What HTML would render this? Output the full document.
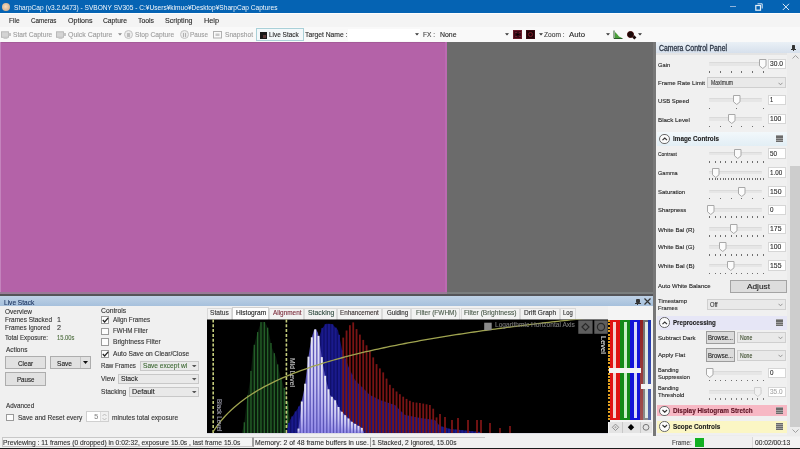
<!DOCTYPE html>
<html><head><meta charset="utf-8"><style>*{margin:0;padding:0;box-sizing:border-box}
html,body{width:800px;height:449px;overflow:hidden;background:#f0f0f0;font-family:"Liberation Sans",sans-serif;font-size:8px;color:#222;position:relative}
.a{position:absolute;white-space:nowrap}
.t{transform-origin:0 50%;-webkit-text-stroke:0.12px currentColor;filter:blur(0.35px)}
</style></head><body>
<div class="a" style="left:0px;top:0px;width:800px;height:13px;background:#0563b3"></div>
<div class="a" style="left:0px;top:13px;width:800px;height:1px;background:#fdfdfd"></div>
<div class="a" style="left:0px;top:14px;width:800px;height:13px;background:#f4f4f4"></div>
<div class="a" style="left:0px;top:27px;width:800px;height:15px;background:#f9f9f9"></div>
<div class="a" style="left:0px;top:42px;width:447px;height:252px;background:#b462a8"></div>
<div class="a" style="left:447px;top:42px;width:208px;height:252px;background:#6b6b6b"></div>
<div class="a" style="left:0px;top:42px;width:447px;height:1.3px;background:#a45a98"></div>
<div class="a" style="left:0px;top:42px;width:1.3px;height:252px;background:#c483bd"></div>
<div class="a" style="left:444.5px;top:42px;width:2.5px;height:252px;background:#bc6ab2"></div>
<div class="a" style="left:0px;top:292.3px;width:447px;height:1.7px;background:#9a7a98"></div>
<div class="a" style="left:447px;top:292.3px;width:208px;height:1.7px;background:#7a7e7e"></div>
<div class="a" style="left:0px;top:294px;width:655px;height:2px;background:#545458"></div>
<div class="a" style="left:0px;top:296px;width:655px;height:10px;background:linear-gradient(#bfd2e6,#a6c0dc)"></div>
<div class="a" style="left:0px;top:306px;width:655px;height:130px;background:#f0f0f0"></div>
<div class="a" style="left:655px;top:42px;width:145px;height:394px;background:#ececec"></div>
<div class="a" style="left:0px;top:436px;width:800px;height:13px;background:#f0f0f0"></div>
<div class="a" style="left:2px;top:3px;width:8px;height:8px;border-radius:50%;background:radial-gradient(circle at 45% 45%,#f3dcc0,#c9a07a)"></div>
<div class="a" style="left:729.5px;top:5.8px;width:6px;height:1px;background:#8fb4dc"></div>
<svg class="a" style="left:755px;top:2.5px" width="8" height="8" style="filter:blur(0.3px)"><path d="M2.5 0.8H7.2V5.5" stroke="#d8e6f4" fill="none" stroke-width="1"/><rect x="0.8" y="2.5" width="4.7" height="4.7" stroke="#e8f0f8" fill="none" stroke-width="1.2"/></svg>
<svg class="a" style="left:782px;top:2.5px" width="8" height="8"><path d="M0.8 0.8L7 7M7 0.8L0.8 7" stroke="#dde9f6" stroke-width="1"/></svg>
<svg class="a" style="left:1px;top:31px" width="11" height="9"><rect x="0.5" y="0.8" width="7" height="5.5" fill="#d4d4d4" stroke="#b4b4b4" stroke-width="0.9"/><rect x="7.5" y="2" width="2.5" height="3" fill="#c4c4c4"/><rect x="2.5" y="6.3" width="4" height="1.6" fill="#c8c8c8"/></svg>
<svg class="a" style="left:56px;top:31px" width="11" height="9"><rect x="0.5" y="0.8" width="7" height="5.5" fill="#d4d4d4" stroke="#b4b4b4" stroke-width="0.9"/><rect x="7.5" y="2" width="2.5" height="3" fill="#c4c4c4"/><rect x="2.5" y="6.3" width="4" height="1.6" fill="#c8c8c8"/></svg>
<svg class="a" style="left:118.0px;top:33px" width="4" height="3"><path d="M0 0.3H4L2 2.6Z" fill="#888"/></svg>
<div class="a" style="left:124px;top:30px;width:9px;height:9px;border-radius:50%;border:1px solid #c4c4c4;background:#ececec"></div>
<div class="a" style="left:127px;top:32.5px;width:3px;height:4px;background:#bdbdbd"></div>
<div class="a" style="left:179.5px;top:30px;width:9px;height:9px;border-radius:50%;border:1px solid #c4c4c4;background:#ececec"></div>
<div class="a" style="left:182.5px;top:32.5px;width:1px;height:4px;background:#b0b0b0"></div>
<div class="a" style="left:184.5px;top:32.5px;width:1px;height:4px;background:#b0b0b0"></div>
<svg class="a" style="left:213px;top:30px" width="9" height="9"><rect x="0.5" y="1.5" width="8" height="6.5" fill="none" stroke="#b0b0b0"/><rect x="2.5" y="3.5" width="4" height="2.5" fill="#c8c8c8"/></svg>
<div class="a" style="left:256px;top:28px;width:47.5px;height:12.5px;background:#f3f8fa;border:1px solid #a9d0d8"></div>
<div class="a" style="left:260px;top:32px;width:7px;height:7px;background:#1a1a1a"></div>
<div class="a" style="left:263px;top:35px;width:3px;height:3px;background:#5a3a3a"></div>
<div class="a" style="left:348px;top:29px;width:72px;height:12px;background:#ffffff"></div>
<svg class="a" style="left:414.5px;top:33px" width="4" height="3"><path d="M0 0.3H4L2 2.6Z" fill="#333"/></svg>
<svg class="a" style="left:504.5px;top:33px" width="4" height="3"><path d="M0 0.3H4L2 2.6Z" fill="#333"/></svg>
<div class="a" style="left:512.5px;top:30px;width:9.5px;height:9px;background:#3a0a16;border:1px solid #6a1a28"></div>
<svg class="a" style="left:513.5px;top:31px" width="8" height="7"><path d="M1.5 1.5h1M5.5 1.5h1M1.5 5.5h1M5.5 5.5h1" stroke="#9a2a40" stroke-width="1"/><path d="M2.5 2.2l3 1.3l-3 1.3z" fill="#000"/></svg>
<div class="a" style="left:525.5px;top:30px;width:9px;height:9px;background:#200608;border:1px solid #3a0a12"></div>
<div class="a" style="left:527.5px;top:32px;width:5px;height:5px;border-radius:50%;border:1px solid #7a1a2a"></div>
<svg class="a" style="left:538.5px;top:33px" width="4" height="3"><path d="M0 0.3H4L2 2.6Z" fill="#333"/></svg>
<svg class="a" style="left:605.5px;top:33px" width="4" height="3"><path d="M0 0.3H4L2 2.6Z" fill="#333"/></svg>
<svg class="a" style="left:613px;top:30px" width="10" height="9"><path d="M1 0.5V8.5H9.5" stroke="#2a5a2a" fill="none" stroke-width="1"/><path d="M2 8L2 2L4 4L6 6.5L9 8z" fill="#4aa03a"/></svg>
<div class="a" style="left:627px;top:30.5px;width:7px;height:7px;border-radius:50%;background:#1a0a0a;border:1px solid #3a0000"></div>
<div class="a" style="left:632.5px;top:36px;width:3px;height:2.5px;background:#1a0a0a;transform:rotate(45deg)"></div>
<svg class="a" style="left:637.5px;top:33px" width="4" height="3"><path d="M0 0.3H4L2 2.6Z" fill="#333"/></svg>
<div class="a" style="left:652.5px;top:42px;width:3px;height:252px;background:#575757"></div>
<div class="a" style="left:655px;top:42px;width:1px;height:394px;background:#8a8a8a"></div>
<div class="a" style="left:656px;top:42px;width:144px;height:11px;background:linear-gradient(#eaf0f6,#d6e0ec)"></div>
<div class="a" style="left:792px;top:44.5px;width:3px;height:4px;background:#333;border-radius:0.5px"></div>
<div class="a" style="left:791.2px;top:48.5px;width:4.6px;height:0.9px;background:#333"></div>
<div class="a" style="left:793.1px;top:49.4px;width:0.9px;height:1.6px;background:#333"></div>
<div class="a" style="left:656px;top:53px;width:144px;height:2px;background:#e4e4e4"></div>
<div class="a" style="left:656px;top:55px;width:131px;height:380px;background:#f0f0f0"></div>
<div class="a" style="left:787px;top:53px;width:13px;height:383px;background:#ececec"></div>
<div class="a" style="left:789.5px;top:165.6px;width:10.5px;height:261.4px;background:#cdcdcd"></div>
<svg class="a" style="left:792px;top:55px" width="7" height="4"><path d="M0.5 3.5L3.5 0.5L6.5 3.5" stroke="#a0a0a0" fill="none" stroke-width="1"/></svg>
<svg class="a" style="left:792px;top:429px" width="7" height="4"><path d="M0.5 0.5L3.5 3.5L6.5 0.5" stroke="#a0a0a0" fill="none" stroke-width="1"/></svg>
<div class="a" style="left:708.5px;top:62px;width:53.5px;height:3.5px;background:#e6e6e6;border-radius:1px;border-top:1px solid #dadada"></div>
<div class="a" style="left:709.0px;top:71.15px;width:1.2px;height:1.5px;background:#6e6e6e"></div>
<div class="a" style="left:720.0px;top:71.15px;width:1.2px;height:1.5px;background:#6e6e6e"></div>
<div class="a" style="left:730.5px;top:71.15px;width:1.2px;height:1.5px;background:#6e6e6e"></div>
<div class="a" style="left:741.0px;top:71.15px;width:1.2px;height:1.5px;background:#6e6e6e"></div>
<div class="a" style="left:752.0px;top:71.15px;width:1.2px;height:1.5px;background:#6e6e6e"></div>
<div class="a" style="left:762.5px;top:71.15px;width:1.2px;height:1.5px;background:#6e6e6e"></div>
<svg class="a" style="left:759.2px;top:59px" width="8" height="10"><path d="M0.5 0.5H7V6.8L3.75 9.5L0.5 6.8Z" fill="#fbfbfb" stroke="#a8a8a8" stroke-width="1"/></svg>
<div class="a" style="left:767.5px;top:58.5px;width:18px;height:10.5px;background:#fff;border:1px solid #d6d6d6"></div>
<div class="a" style="left:707px;top:77.4px;width:78.5px;height:11px;background:#e9e9e9;border:1px solid #cfcfcf"></div>
<svg class="a" style="left:778px;top:81.5px" width="5" height="4"><path d="M0.5 0.8L2.5 2.8L4.5 0.8" stroke="#8a8a8a" fill="none" stroke-width="0.9"/></svg>
<div class="a" style="left:708.5px;top:98px;width:53.5px;height:3.5px;background:#e6e6e6;border-radius:1px;border-top:1px solid #dadada"></div>
<div class="a" style="left:709.0px;top:107.75px;width:1.2px;height:1.5px;background:#6e6e6e"></div>
<div class="a" style="left:736.0px;top:107.75px;width:1.2px;height:1.5px;background:#6e6e6e"></div>
<div class="a" style="left:762.5px;top:107.75px;width:1.2px;height:1.5px;background:#6e6e6e"></div>
<svg class="a" style="left:733px;top:95px" width="8" height="10"><path d="M0.5 0.5H7V6.8L3.75 9.5L0.5 6.8Z" fill="#fbfbfb" stroke="#a8a8a8" stroke-width="1"/></svg>
<div class="a" style="left:767.5px;top:94.5px;width:18px;height:10.5px;background:#fff;border:1px solid #d6d6d6"></div>
<div class="a" style="left:708.5px;top:117px;width:53.5px;height:3.5px;background:#e6e6e6;border-radius:1px;border-top:1px solid #dadada"></div>
<div class="a" style="left:709.0px;top:125.85px;width:1.2px;height:1.5px;background:#6e6e6e"></div>
<div class="a" style="left:720.0px;top:125.85px;width:1.2px;height:1.5px;background:#6e6e6e"></div>
<div class="a" style="left:730.5px;top:125.85px;width:1.2px;height:1.5px;background:#6e6e6e"></div>
<div class="a" style="left:741.0px;top:125.85px;width:1.2px;height:1.5px;background:#6e6e6e"></div>
<div class="a" style="left:752.0px;top:125.85px;width:1.2px;height:1.5px;background:#6e6e6e"></div>
<div class="a" style="left:762.5px;top:125.85px;width:1.2px;height:1.5px;background:#6e6e6e"></div>
<svg class="a" style="left:728px;top:114px" width="8" height="10"><path d="M0.5 0.5H7V6.8L3.75 9.5L0.5 6.8Z" fill="#fbfbfb" stroke="#a8a8a8" stroke-width="1"/></svg>
<div class="a" style="left:767.5px;top:113.5px;width:18px;height:10.5px;background:#fff;border:1px solid #d6d6d6"></div>
<div class="a" style="left:657px;top:131.75px;width:130px;height:14.050000000000011px;background:linear-gradient(#f2f8fb,#e2eef5)"></div>
<div class="a" style="left:659.4px;top:133.57500000000002px;width:10.4px;height:10.4px;border-radius:50%;border:0.9px solid #6a6a6a;background:#fbfbfb"></div>
<svg class="a" style="left:660.9px;top:135.675px" width="7.5" height="6"><path d="M1.5 4.2L3.75 2L6 4.2" stroke="#333" fill="none" stroke-width="1.1"/></svg>
<div class="a" style="left:776px;top:135.375px;width:7px;height:6.8px;background:#a0a0a0"></div>
<div class="a" style="left:776px;top:135.675px;width:7px;height:0.9px;background:#6a6a6a"></div>
<div class="a" style="left:776px;top:137.425px;width:7px;height:0.9px;background:#6a6a6a"></div>
<div class="a" style="left:776px;top:139.175px;width:7px;height:0.9px;background:#6a6a6a"></div>
<div class="a" style="left:776px;top:140.925px;width:7px;height:0.9px;background:#6a6a6a"></div>
<div class="a" style="left:708.5px;top:151.5px;width:53.5px;height:3.5px;background:#e6e6e6;border-radius:1px;border-top:1px solid #dadada"></div>
<div class="a" style="left:709.0px;top:161.05px;width:1.2px;height:1.5px;background:#6e6e6e"></div>
<div class="a" style="left:714.5px;top:161.05px;width:1.2px;height:1.5px;background:#6e6e6e"></div>
<div class="a" style="left:720.0px;top:161.05px;width:1.2px;height:1.5px;background:#6e6e6e"></div>
<div class="a" style="left:725.0px;top:161.05px;width:1.2px;height:1.5px;background:#6e6e6e"></div>
<div class="a" style="left:730.5px;top:161.05px;width:1.2px;height:1.5px;background:#6e6e6e"></div>
<div class="a" style="left:736.0px;top:161.05px;width:1.2px;height:1.5px;background:#6e6e6e"></div>
<div class="a" style="left:741.0px;top:161.05px;width:1.2px;height:1.5px;background:#6e6e6e"></div>
<div class="a" style="left:746.5px;top:161.05px;width:1.2px;height:1.5px;background:#6e6e6e"></div>
<div class="a" style="left:752.0px;top:161.05px;width:1.2px;height:1.5px;background:#6e6e6e"></div>
<div class="a" style="left:757.0px;top:161.05px;width:1.2px;height:1.5px;background:#6e6e6e"></div>
<div class="a" style="left:762.5px;top:161.05px;width:1.2px;height:1.5px;background:#6e6e6e"></div>
<svg class="a" style="left:733.5px;top:148.5px" width="8" height="10"><path d="M0.5 0.5H7V6.8L3.75 9.5L0.5 6.8Z" fill="#fbfbfb" stroke="#a8a8a8" stroke-width="1"/></svg>
<div class="a" style="left:767.5px;top:148.0px;width:18px;height:10.5px;background:#fff;border:1px solid #d6d6d6"></div>
<div class="a" style="left:708.5px;top:170.5px;width:53.5px;height:3.5px;background:#e6e6e6;border-radius:1px;border-top:1px solid #dadada"></div>
<div class="a" style="left:709.0px;top:178.45px;width:1.2px;height:1.5px;background:#6e6e6e"></div>
<div class="a" style="left:712.0px;top:178.45px;width:1.2px;height:1.5px;background:#6e6e6e"></div>
<div class="a" style="left:714.5px;top:178.45px;width:1.2px;height:1.5px;background:#6e6e6e"></div>
<div class="a" style="left:717.0px;top:178.45px;width:1.2px;height:1.5px;background:#6e6e6e"></div>
<div class="a" style="left:720.0px;top:178.45px;width:1.2px;height:1.5px;background:#6e6e6e"></div>
<div class="a" style="left:722.5px;top:178.45px;width:1.2px;height:1.5px;background:#6e6e6e"></div>
<div class="a" style="left:725.0px;top:178.45px;width:1.2px;height:1.5px;background:#6e6e6e"></div>
<div class="a" style="left:728.0px;top:178.45px;width:1.2px;height:1.5px;background:#6e6e6e"></div>
<div class="a" style="left:730.5px;top:178.45px;width:1.2px;height:1.5px;background:#6e6e6e"></div>
<div class="a" style="left:733.0px;top:178.45px;width:1.2px;height:1.5px;background:#6e6e6e"></div>
<div class="a" style="left:736.0px;top:178.45px;width:1.2px;height:1.5px;background:#6e6e6e"></div>
<div class="a" style="left:738.5px;top:178.45px;width:1.2px;height:1.5px;background:#6e6e6e"></div>
<div class="a" style="left:741.0px;top:178.45px;width:1.2px;height:1.5px;background:#6e6e6e"></div>
<div class="a" style="left:744.0px;top:178.45px;width:1.2px;height:1.5px;background:#6e6e6e"></div>
<div class="a" style="left:746.5px;top:178.45px;width:1.2px;height:1.5px;background:#6e6e6e"></div>
<div class="a" style="left:749.0px;top:178.45px;width:1.2px;height:1.5px;background:#6e6e6e"></div>
<div class="a" style="left:752.0px;top:178.45px;width:1.2px;height:1.5px;background:#6e6e6e"></div>
<div class="a" style="left:754.5px;top:178.45px;width:1.2px;height:1.5px;background:#6e6e6e"></div>
<div class="a" style="left:757.0px;top:178.45px;width:1.2px;height:1.5px;background:#6e6e6e"></div>
<div class="a" style="left:760.0px;top:178.45px;width:1.2px;height:1.5px;background:#6e6e6e"></div>
<div class="a" style="left:762.5px;top:178.45px;width:1.2px;height:1.5px;background:#6e6e6e"></div>
<svg class="a" style="left:712px;top:167.5px" width="8" height="10"><path d="M0.5 0.5H7V6.8L3.75 9.5L0.5 6.8Z" fill="#fbfbfb" stroke="#a8a8a8" stroke-width="1"/></svg>
<div class="a" style="left:767.5px;top:167.0px;width:18px;height:10.5px;background:#fff;border:1px solid #d6d6d6"></div>
<div class="a" style="left:708.5px;top:189.5px;width:53.5px;height:3.5px;background:#e6e6e6;border-radius:1px;border-top:1px solid #dadada"></div>
<div class="a" style="left:709.0px;top:197.75px;width:1.2px;height:1.5px;background:#6e6e6e"></div>
<div class="a" style="left:720.0px;top:197.75px;width:1.2px;height:1.5px;background:#6e6e6e"></div>
<div class="a" style="left:730.5px;top:197.75px;width:1.2px;height:1.5px;background:#6e6e6e"></div>
<div class="a" style="left:741.0px;top:197.75px;width:1.2px;height:1.5px;background:#6e6e6e"></div>
<div class="a" style="left:752.0px;top:197.75px;width:1.2px;height:1.5px;background:#6e6e6e"></div>
<div class="a" style="left:762.5px;top:197.75px;width:1.2px;height:1.5px;background:#6e6e6e"></div>
<svg class="a" style="left:738px;top:186.5px" width="8" height="10"><path d="M0.5 0.5H7V6.8L3.75 9.5L0.5 6.8Z" fill="#fbfbfb" stroke="#a8a8a8" stroke-width="1"/></svg>
<div class="a" style="left:767.5px;top:186.0px;width:18px;height:10.5px;background:#fff;border:1px solid #d6d6d6"></div>
<div class="a" style="left:708.5px;top:208px;width:53.5px;height:3.5px;background:#e6e6e6;border-radius:1px;border-top:1px solid #dadada"></div>
<div class="a" style="left:709.0px;top:216.45px;width:1.2px;height:1.5px;background:#6e6e6e"></div>
<div class="a" style="left:714.5px;top:216.45px;width:1.2px;height:1.5px;background:#6e6e6e"></div>
<div class="a" style="left:720.0px;top:216.45px;width:1.2px;height:1.5px;background:#6e6e6e"></div>
<div class="a" style="left:725.0px;top:216.45px;width:1.2px;height:1.5px;background:#6e6e6e"></div>
<div class="a" style="left:730.5px;top:216.45px;width:1.2px;height:1.5px;background:#6e6e6e"></div>
<div class="a" style="left:736.0px;top:216.45px;width:1.2px;height:1.5px;background:#6e6e6e"></div>
<div class="a" style="left:741.0px;top:216.45px;width:1.2px;height:1.5px;background:#6e6e6e"></div>
<div class="a" style="left:746.5px;top:216.45px;width:1.2px;height:1.5px;background:#6e6e6e"></div>
<div class="a" style="left:752.0px;top:216.45px;width:1.2px;height:1.5px;background:#6e6e6e"></div>
<div class="a" style="left:757.0px;top:216.45px;width:1.2px;height:1.5px;background:#6e6e6e"></div>
<div class="a" style="left:762.5px;top:216.45px;width:1.2px;height:1.5px;background:#6e6e6e"></div>
<svg class="a" style="left:707px;top:205px" width="8" height="10"><path d="M0.5 0.5H7V6.8L3.75 9.5L0.5 6.8Z" fill="#fbfbfb" stroke="#a8a8a8" stroke-width="1"/></svg>
<div class="a" style="left:767.5px;top:204.5px;width:18px;height:10.5px;background:#fff;border:1px solid #d6d6d6"></div>
<div class="a" style="left:708.5px;top:227px;width:53.5px;height:3.5px;background:#e6e6e6;border-radius:1px;border-top:1px solid #dadada"></div>
<div class="a" style="left:709.0px;top:235.25px;width:1.2px;height:1.5px;background:#6e6e6e"></div>
<div class="a" style="left:714.5px;top:235.25px;width:1.2px;height:1.5px;background:#6e6e6e"></div>
<div class="a" style="left:720.0px;top:235.25px;width:1.2px;height:1.5px;background:#6e6e6e"></div>
<div class="a" style="left:725.0px;top:235.25px;width:1.2px;height:1.5px;background:#6e6e6e"></div>
<div class="a" style="left:730.5px;top:235.25px;width:1.2px;height:1.5px;background:#6e6e6e"></div>
<div class="a" style="left:736.0px;top:235.25px;width:1.2px;height:1.5px;background:#6e6e6e"></div>
<div class="a" style="left:741.0px;top:235.25px;width:1.2px;height:1.5px;background:#6e6e6e"></div>
<div class="a" style="left:746.5px;top:235.25px;width:1.2px;height:1.5px;background:#6e6e6e"></div>
<div class="a" style="left:752.0px;top:235.25px;width:1.2px;height:1.5px;background:#6e6e6e"></div>
<div class="a" style="left:757.0px;top:235.25px;width:1.2px;height:1.5px;background:#6e6e6e"></div>
<div class="a" style="left:762.5px;top:235.25px;width:1.2px;height:1.5px;background:#6e6e6e"></div>
<svg class="a" style="left:729.7px;top:224px" width="8" height="10"><path d="M0.5 0.5H7V6.8L3.75 9.5L0.5 6.8Z" fill="#fbfbfb" stroke="#a8a8a8" stroke-width="1"/></svg>
<div class="a" style="left:767.5px;top:223.5px;width:18px;height:10.5px;background:#fff;border:1px solid #d6d6d6"></div>
<div class="a" style="left:708.5px;top:245px;width:53.5px;height:3.5px;background:#e6e6e6;border-radius:1px;border-top:1px solid #dadada"></div>
<div class="a" style="left:709.0px;top:254.05px;width:1.2px;height:1.5px;background:#6e6e6e"></div>
<div class="a" style="left:714.5px;top:254.05px;width:1.2px;height:1.5px;background:#6e6e6e"></div>
<div class="a" style="left:720.0px;top:254.05px;width:1.2px;height:1.5px;background:#6e6e6e"></div>
<div class="a" style="left:725.0px;top:254.05px;width:1.2px;height:1.5px;background:#6e6e6e"></div>
<div class="a" style="left:730.5px;top:254.05px;width:1.2px;height:1.5px;background:#6e6e6e"></div>
<div class="a" style="left:736.0px;top:254.05px;width:1.2px;height:1.5px;background:#6e6e6e"></div>
<div class="a" style="left:741.0px;top:254.05px;width:1.2px;height:1.5px;background:#6e6e6e"></div>
<div class="a" style="left:746.5px;top:254.05px;width:1.2px;height:1.5px;background:#6e6e6e"></div>
<div class="a" style="left:752.0px;top:254.05px;width:1.2px;height:1.5px;background:#6e6e6e"></div>
<div class="a" style="left:757.0px;top:254.05px;width:1.2px;height:1.5px;background:#6e6e6e"></div>
<div class="a" style="left:762.5px;top:254.05px;width:1.2px;height:1.5px;background:#6e6e6e"></div>
<svg class="a" style="left:719.4px;top:242px" width="8" height="10"><path d="M0.5 0.5H7V6.8L3.75 9.5L0.5 6.8Z" fill="#fbfbfb" stroke="#a8a8a8" stroke-width="1"/></svg>
<div class="a" style="left:767.5px;top:241.5px;width:18px;height:10.5px;background:#fff;border:1px solid #d6d6d6"></div>
<div class="a" style="left:708.5px;top:263.5px;width:53.5px;height:3.5px;background:#e6e6e6;border-radius:1px;border-top:1px solid #dadada"></div>
<div class="a" style="left:709.0px;top:272.65px;width:1.2px;height:1.5px;background:#6e6e6e"></div>
<div class="a" style="left:714.5px;top:272.65px;width:1.2px;height:1.5px;background:#6e6e6e"></div>
<div class="a" style="left:720.0px;top:272.65px;width:1.2px;height:1.5px;background:#6e6e6e"></div>
<div class="a" style="left:725.0px;top:272.65px;width:1.2px;height:1.5px;background:#6e6e6e"></div>
<div class="a" style="left:730.5px;top:272.65px;width:1.2px;height:1.5px;background:#6e6e6e"></div>
<div class="a" style="left:736.0px;top:272.65px;width:1.2px;height:1.5px;background:#6e6e6e"></div>
<div class="a" style="left:741.0px;top:272.65px;width:1.2px;height:1.5px;background:#6e6e6e"></div>
<div class="a" style="left:746.5px;top:272.65px;width:1.2px;height:1.5px;background:#6e6e6e"></div>
<div class="a" style="left:752.0px;top:272.65px;width:1.2px;height:1.5px;background:#6e6e6e"></div>
<div class="a" style="left:757.0px;top:272.65px;width:1.2px;height:1.5px;background:#6e6e6e"></div>
<div class="a" style="left:762.5px;top:272.65px;width:1.2px;height:1.5px;background:#6e6e6e"></div>
<svg class="a" style="left:727.3px;top:260.5px" width="8" height="10"><path d="M0.5 0.5H7V6.8L3.75 9.5L0.5 6.8Z" fill="#fbfbfb" stroke="#a8a8a8" stroke-width="1"/></svg>
<div class="a" style="left:767.5px;top:260.0px;width:18px;height:10.5px;background:#fff;border:1px solid #d6d6d6"></div>
<div class="a" style="left:730.3px;top:279.8px;width:56.3px;height:13.1px;background:#dddddd;border:1px solid #a4a4a4"></div>
<div class="a" style="left:707.2px;top:298.5px;width:78.8px;height:11.8px;background:#e9e9e9;border:1px solid #cfcfcf"></div>
<svg class="a" style="left:778px;top:303px" width="5" height="4"><path d="M0.5 0.8L2.5 2.8L4.5 0.8" stroke="#8a8a8a" fill="none" stroke-width="0.9"/></svg>
<div class="a" style="left:657px;top:315.6px;width:130px;height:14.099999999999966px;background:#e6e6f6"></div>
<div class="a" style="left:659.4px;top:317.45px;width:10.4px;height:10.4px;border-radius:50%;border:0.9px solid #6a6a6a;background:#fbfbfb"></div>
<svg class="a" style="left:660.9px;top:319.54999999999995px" width="7.5" height="6"><path d="M1.5 4.2L3.75 2L6 4.2" stroke="#333" fill="none" stroke-width="1.1"/></svg>
<div class="a" style="left:776px;top:319.25px;width:7px;height:6.8px;background:#a0a0a0"></div>
<div class="a" style="left:776px;top:319.54999999999995px;width:7px;height:0.9px;background:#6a6a6a"></div>
<div class="a" style="left:776px;top:321.29999999999995px;width:7px;height:0.9px;background:#6a6a6a"></div>
<div class="a" style="left:776px;top:323.04999999999995px;width:7px;height:0.9px;background:#6a6a6a"></div>
<div class="a" style="left:776px;top:324.79999999999995px;width:7px;height:0.9px;background:#6a6a6a"></div>
<div class="a" style="left:706.3px;top:331.2px;width:28.5px;height:13.2px;background:#dcdcdc;border:1px solid #9c9c9c"></div>
<div class="a" style="left:737.2px;top:332.40000000000003px;width:48.8px;height:11px;background:#e9e9e9;border:1px solid #cfcfcf"></div>
<svg class="a" style="left:778px;top:336.3px" width="5" height="4"><path d="M0.5 0.8L2.5 2.8L4.5 0.8" stroke="#8a8a8a" fill="none" stroke-width="0.9"/></svg>
<div class="a" style="left:706.3px;top:348.4px;width:28.5px;height:13.2px;background:#dcdcdc;border:1px solid #9c9c9c"></div>
<div class="a" style="left:737.2px;top:349.6px;width:48.8px;height:11px;background:#e9e9e9;border:1px solid #cfcfcf"></div>
<svg class="a" style="left:778px;top:353.5px" width="5" height="4"><path d="M0.5 0.8L2.5 2.8L4.5 0.8" stroke="#8a8a8a" fill="none" stroke-width="0.9"/></svg>
<div class="a" style="left:708.5px;top:371px;width:53.5px;height:3.5px;background:#e6e6e6;border-radius:1px;border-top:1px solid #dadada"></div>
<div class="a" style="left:709.0px;top:379.55px;width:1.2px;height:1.5px;background:#6e6e6e"></div>
<div class="a" style="left:714.5px;top:379.55px;width:1.2px;height:1.5px;background:#6e6e6e"></div>
<div class="a" style="left:720.0px;top:379.55px;width:1.2px;height:1.5px;background:#6e6e6e"></div>
<div class="a" style="left:725.0px;top:379.55px;width:1.2px;height:1.5px;background:#6e6e6e"></div>
<div class="a" style="left:730.5px;top:379.55px;width:1.2px;height:1.5px;background:#6e6e6e"></div>
<div class="a" style="left:736.0px;top:379.55px;width:1.2px;height:1.5px;background:#6e6e6e"></div>
<div class="a" style="left:741.0px;top:379.55px;width:1.2px;height:1.5px;background:#6e6e6e"></div>
<div class="a" style="left:746.5px;top:379.55px;width:1.2px;height:1.5px;background:#6e6e6e"></div>
<div class="a" style="left:752.0px;top:379.55px;width:1.2px;height:1.5px;background:#6e6e6e"></div>
<div class="a" style="left:757.0px;top:379.55px;width:1.2px;height:1.5px;background:#6e6e6e"></div>
<div class="a" style="left:762.5px;top:379.55px;width:1.2px;height:1.5px;background:#6e6e6e"></div>
<svg class="a" style="left:706.3px;top:368px" width="8" height="10"><path d="M0.5 0.5H7V6.8L3.75 9.5L0.5 6.8Z" fill="#fbfbfb" stroke="#a8a8a8" stroke-width="1"/></svg>
<div class="a" style="left:767.5px;top:367.5px;width:18px;height:10.5px;background:#fff;border:1px solid #d6d6d6"></div>
<div class="a" style="left:708.5px;top:390.2px;width:53.5px;height:3.5px;background:#e6e6e6;border-radius:1px;border-top:1px solid #dadada"></div>
<div class="a" style="left:709.0px;top:398.25px;width:1.2px;height:1.5px;background:#808080"></div>
<div class="a" style="left:714.5px;top:398.25px;width:1.2px;height:1.5px;background:#808080"></div>
<div class="a" style="left:720.0px;top:398.25px;width:1.2px;height:1.5px;background:#808080"></div>
<div class="a" style="left:725.0px;top:398.25px;width:1.2px;height:1.5px;background:#808080"></div>
<div class="a" style="left:730.5px;top:398.25px;width:1.2px;height:1.5px;background:#808080"></div>
<div class="a" style="left:736.0px;top:398.25px;width:1.2px;height:1.5px;background:#808080"></div>
<div class="a" style="left:741.0px;top:398.25px;width:1.2px;height:1.5px;background:#808080"></div>
<div class="a" style="left:746.5px;top:398.25px;width:1.2px;height:1.5px;background:#808080"></div>
<div class="a" style="left:752.0px;top:398.25px;width:1.2px;height:1.5px;background:#808080"></div>
<div class="a" style="left:757.0px;top:398.25px;width:1.2px;height:1.5px;background:#808080"></div>
<div class="a" style="left:762.5px;top:398.25px;width:1.2px;height:1.5px;background:#808080"></div>
<svg class="a" style="left:754px;top:387.2px" width="8" height="10"><path d="M0.5 0.5H7V6.8L3.75 9.5L0.5 6.8Z" fill="#f0f0f0" stroke="#d0d0d0" stroke-width="1"/></svg>
<div class="a" style="left:767.5px;top:386.7px;width:18px;height:10.5px;background:#fff;border:1px solid #d6d6d6"></div>
<div class="a" style="left:657px;top:405.4px;width:130px;height:10.700000000000045px;background:#f7b8c4"></div>
<div class="a" style="left:659.4px;top:405.55px;width:10.4px;height:10.4px;border-radius:50%;border:0.9px solid #6a6a6a;background:#fbfbfb"></div>
<svg class="a" style="left:660.9px;top:407.65px" width="7.5" height="6"><path d="M1.5 2L3.75 4.2L6 2" stroke="#333" fill="none" stroke-width="1.1"/></svg>
<div class="a" style="left:776px;top:407.35px;width:7px;height:6.8px;background:#a0a0a0"></div>
<div class="a" style="left:776px;top:407.65px;width:7px;height:0.9px;background:#6a6a6a"></div>
<div class="a" style="left:776px;top:409.4px;width:7px;height:0.9px;background:#6a6a6a"></div>
<div class="a" style="left:776px;top:411.15px;width:7px;height:0.9px;background:#6a6a6a"></div>
<div class="a" style="left:776px;top:412.9px;width:7px;height:0.9px;background:#6a6a6a"></div>
<div class="a" style="left:657px;top:420.5px;width:130px;height:12.100000000000023px;background:#fbf6c4"></div>
<div class="a" style="left:659.4px;top:421.35px;width:10.4px;height:10.4px;border-radius:50%;border:0.9px solid #6a6a6a;background:#fbfbfb"></div>
<svg class="a" style="left:660.9px;top:423.45px" width="7.5" height="6"><path d="M1.5 2L3.75 4.2L6 2" stroke="#333" fill="none" stroke-width="1.1"/></svg>
<div class="a" style="left:776px;top:423.15000000000003px;width:7px;height:6.8px;background:#a0a0a0"></div>
<div class="a" style="left:776px;top:423.45px;width:7px;height:0.9px;background:#6a6a6a"></div>
<div class="a" style="left:776px;top:425.2px;width:7px;height:0.9px;background:#6a6a6a"></div>
<div class="a" style="left:776px;top:426.95px;width:7px;height:0.9px;background:#6a6a6a"></div>
<div class="a" style="left:776px;top:428.7px;width:7px;height:0.9px;background:#6a6a6a"></div>
<div class="a" style="left:636px;top:298.5px;width:3.5px;height:4px;background:#333;border-radius:1px"></div>
<div class="a" style="left:635px;top:302.5px;width:5.5px;height:1px;background:#333"></div>
<div class="a" style="left:637.2px;top:303.5px;width:1px;height:1.5px;background:#333"></div>
<svg class="a" style="left:643.5px;top:298px" width="7" height="7"><path d="M0.5 0.5L6.5 6.5M6.5 0.5L0.5 6.5" stroke="#333" stroke-width="1.2"/></svg>
<div class="a" style="left:5.25px;top:355.5px;width:41.0px;height:13.100000000000023px;background:#e1e1e1;border:1px solid #adadad"></div>
<div class="a" style="left:49.75px;top:355.5px;width:41.25px;height:13.100000000000023px;background:#e1e1e1;border:1px solid #adadad"></div>
<div class="a" style="left:80px;top:356.5px;width:1px;height:11px;background:#c4c4c4"></div>
<svg class="a" style="left:83px;top:361px" width="5" height="3"><path d="M0 0H5L2.5 3Z" fill="#111"/></svg>
<div class="a" style="left:5.25px;top:372.4px;width:41.0px;height:13.350000000000023px;background:#e1e1e1;border:1px solid #adadad"></div>
<div class="a" style="left:6.25px;top:413.6px;width:8.2px;height:7.8px;background:#fdfdfd;border:1px solid #9a9a9a"></div>
<div class="a" style="left:85.7px;top:411.2px;width:23.5px;height:11.3px;background:#fff;border:1px solid #d0d0d0"></div>
<div class="a" style="left:99.5px;top:412.2px;width:8.7px;height:9.3px;background:#f0f0f0;border-left:1px solid #dcdcdc"></div>
<svg class="a" style="left:101.5px;top:413px" width="5" height="8"><path d="M0.5 3L2.5 1L4.5 3M0.5 5L2.5 7L4.5 5" stroke="#b0b0b0" fill="none" stroke-width="0.8"/></svg>
<div class="a" style="left:101.2px;top:316.2px;width:8.2px;height:7.8px;background:#fdfdfd;border:1px solid #9a9a9a"></div>
<svg class="a" style="left:102.2px;top:317.2px" width="7" height="6"><path d="M0.8 3L2.6 5L6.2 0.8" stroke="#222" fill="none" stroke-width="1.2"/></svg>
<div class="a" style="left:101.2px;top:327.5px;width:8.2px;height:7.8px;background:#fdfdfd;border:1px solid #9a9a9a"></div>
<div class="a" style="left:101.2px;top:338.2px;width:8.2px;height:7.8px;background:#fdfdfd;border:1px solid #9a9a9a"></div>
<div class="a" style="left:101.2px;top:350.2px;width:8.2px;height:7.8px;background:#fdfdfd;border:1px solid #9a9a9a"></div>
<svg class="a" style="left:102.2px;top:351.2px" width="7" height="6"><path d="M0.8 3L2.6 5L6.2 0.8" stroke="#222" fill="none" stroke-width="1.2"/></svg>
<div class="a" style="left:140.2px;top:361px;width:58.900000000000006px;height:9.699999999999989px;background:#e9e9e9;border:1px solid #c8c8c8"></div>
<svg class="a" style="left:192.1px;top:364.85px" width="4.5" height="2.5"><path d="M0 0H4.5L2.25 2.5Z" fill="#555"/></svg>
<div class="a" style="left:117.7px;top:374.2px;width:81.39999999999999px;height:9.600000000000023px;background:#e9e9e9;border:1px solid #c8c8c8"></div>
<svg class="a" style="left:192.1px;top:378.0px" width="4.5" height="2.5"><path d="M0 0H4.5L2.25 2.5Z" fill="#555"/></svg>
<div class="a" style="left:129.3px;top:386.8px;width:69.79999999999998px;height:9.899999999999977px;background:#e9e9e9;border:1px solid #c8c8c8"></div>
<svg class="a" style="left:192.1px;top:390.75px" width="4.5" height="2.5"><path d="M0 0H4.5L2.25 2.5Z" fill="#555"/></svg>
<div class="a" style="left:206px;top:306px;width:449px;height:130px;background:#f0f0f0"></div>
<div class="a" style="left:207px;top:308px;width:24.5px;height:11.5px;background:#f2f2f2;border:1px solid #dadada;border-bottom:none"></div>
<div class="a" style="left:232.4px;top:306.5px;width:36.79999999999998px;height:13.5px;background:#fdfdfd;border:1px solid #d0d0d0;border-bottom:none"></div>
<div class="a" style="left:269.2px;top:308px;width:35.0px;height:11.5px;background:#f2f2f2;border:1px solid #dadada;border-bottom:none"></div>
<div class="a" style="left:304.2px;top:308px;width:32.400000000000034px;height:11.5px;background:#f2f2f2;border:1px solid #dadada;border-bottom:none"></div>
<div class="a" style="left:337px;top:308px;width:44.69999999999999px;height:11.5px;background:#f2f2f2;border:1px solid #dadada;border-bottom:none"></div>
<div class="a" style="left:381.7px;top:308px;width:29.69999999999999px;height:11.5px;background:#f2f2f2;border:1px solid #dadada;border-bottom:none"></div>
<div class="a" style="left:411.4px;top:308px;width:49.10000000000002px;height:11.5px;background:#f2f2f2;border:1px solid #dadada;border-bottom:none"></div>
<div class="a" style="left:460.6px;top:308px;width:59.0px;height:11.5px;background:#f2f2f2;border:1px solid #dadada;border-bottom:none"></div>
<div class="a" style="left:519.6px;top:308px;width:40.0px;height:11.5px;background:#f2f2f2;border:1px solid #dadada;border-bottom:none"></div>
<div class="a" style="left:559.6px;top:308px;width:16.399999999999977px;height:11.5px;background:#f2f2f2;border:1px solid #dadada;border-bottom:none"></div>
<svg class="a" style="left:0;top:0" width="800" height="449" viewBox="0 0 800 449"><rect x="207" y="319.5" width="401" height="113.5" fill="#000"/><defs><linearGradient id="wg" x1="0" y1="0" x2="0" y2="1"><stop offset="0" stop-color="#e8e8f4"/><stop offset="0.5" stop-color="#c8c4f4"/><stop offset="1" stop-color="#9088e8"/></linearGradient></defs><polygon points="242,433 242.0,432.0 244.0,425.0 247.0,399.0 250.0,381.0 253.0,350.0 257.0,334.0 261.0,322.0 265.0,322.0 268.0,328.5 272.0,348.0 276.0,357.0 280.0,375.0 284.0,387.0 287.0,397.0 290.0,418.0 292.0,432.0 292,433" fill="#0a1c0c"/><rect x="243.66" y="422.3" width="1.3" height="10.7" fill="#25622a"/><rect x="247.00" y="395.1" width="1.3" height="37.9" fill="#25622a"/><rect x="250.33" y="370.9" width="1.3" height="62.1" fill="#25622a"/><rect x="253.66" y="344.8" width="1.3" height="88.2" fill="#25622a"/><rect x="257.00" y="332.1" width="1.3" height="100.9" fill="#25622a"/><rect x="260.33" y="322.1" width="1.3" height="110.9" fill="#25622a"/><rect x="263.66" y="322.0" width="1.3" height="111.0" fill="#25622a"/><rect x="266.99" y="327.7" width="1.3" height="105.3" fill="#25622a"/><rect x="270.33" y="343.0" width="1.3" height="90.0" fill="#25622a"/><rect x="273.66" y="353.2" width="1.3" height="79.8" fill="#25622a"/><rect x="276.99" y="364.4" width="1.3" height="68.6" fill="#25622a"/><rect x="280.33" y="377.9" width="1.3" height="55.1" fill="#25622a"/><rect x="283.66" y="388.0" width="1.3" height="45.0" fill="#25622a"/><rect x="286.99" y="401.5" width="1.3" height="31.5" fill="#25622a"/><rect x="290.32" y="424.8" width="1.3" height="8.2" fill="#25622a"/><polygon points="286,433 286.0,432.0 290.0,420.0 300.0,405.0 312.0,380.0 318.0,340.0 322.0,328.5 326.0,323.8 332.0,324.0 338.0,330.0 342.0,349.5 346.0,360.0 350.0,370.0 355.0,380.0 360.0,385.0 370.0,395.0 380.0,400.0 395.0,405.0 405.0,415.0 420.0,418.0 435.0,420.0 440.0,426.0 450.0,429.0 460.0,430.0 480.0,432.0 480,433" fill="#10106a"/><rect x="287.99" y="423.0" width="2.0" height="10.0" fill="#1a1a8c"/><rect x="291.32" y="416.5" width="2.0" height="16.5" fill="#1a1a8c"/><rect x="294.66" y="411.5" width="2.0" height="21.5" fill="#1a1a8c"/><rect x="297.99" y="406.5" width="2.0" height="26.5" fill="#1a1a8c"/><rect x="301.32" y="400.2" width="2.0" height="32.8" fill="#1a1a8c"/><rect x="304.66" y="393.2" width="2.0" height="39.8" fill="#1a1a8c"/><rect x="307.99" y="386.3" width="2.0" height="46.7" fill="#1a1a8c"/><rect x="311.32" y="377.8" width="2.0" height="55.2" fill="#1a1a8c"/><rect x="314.66" y="355.6" width="2.0" height="77.4" fill="#1a1a8c"/><rect x="317.99" y="337.2" width="2.0" height="95.8" fill="#1a1a8c"/><rect x="321.32" y="328.1" width="2.0" height="104.9" fill="#1a1a8c"/><rect x="324.65" y="324.2" width="2.0" height="108.8" fill="#1a1a8c"/><rect x="327.99" y="323.9" width="2.0" height="109.1" fill="#1a1a8c"/><rect x="331.32" y="324.3" width="2.0" height="108.7" fill="#1a1a8c"/><rect x="334.65" y="327.7" width="2.0" height="105.3" fill="#1a1a8c"/><rect x="337.99" y="334.8" width="2.0" height="98.2" fill="#1a1a8c"/><rect x="341.32" y="350.3" width="2.0" height="82.7" fill="#1a1a8c"/><rect x="344.65" y="359.1" width="2.0" height="73.9" fill="#1a1a8c"/><rect x="347.99" y="367.5" width="2.0" height="65.5" fill="#1a1a8c"/><rect x="351.32" y="374.6" width="2.0" height="58.4" fill="#1a1a8c"/><rect x="354.65" y="380.7" width="2.0" height="52.3" fill="#1a1a8c"/><rect x="357.99" y="384.0" width="2.0" height="49.0" fill="#1a1a8c"/><rect x="361.32" y="387.3" width="2.0" height="45.7" fill="#1a1a8c"/><rect x="364.65" y="390.7" width="2.0" height="42.3" fill="#1a1a8c"/><rect x="367.98" y="394.0" width="2.0" height="39.0" fill="#1a1a8c"/><rect x="371.32" y="396.2" width="2.0" height="36.8" fill="#1a1a8c"/><rect x="374.65" y="397.8" width="2.0" height="35.2" fill="#1a1a8c"/><rect x="377.98" y="399.5" width="2.0" height="33.5" fill="#1a1a8c"/><rect x="381.32" y="400.8" width="2.0" height="32.2" fill="#1a1a8c"/><rect x="384.65" y="401.9" width="2.0" height="31.1" fill="#1a1a8c"/><rect x="387.98" y="403.0" width="2.0" height="30.0" fill="#1a1a8c"/><rect x="391.31" y="404.1" width="2.0" height="28.9" fill="#1a1a8c"/><rect x="394.65" y="405.6" width="2.0" height="27.4" fill="#1a1a8c"/><rect x="397.98" y="409.0" width="2.0" height="24.0" fill="#1a1a8c"/><rect x="401.31" y="412.3" width="2.0" height="20.7" fill="#1a1a8c"/><rect x="404.65" y="415.1" width="2.0" height="17.9" fill="#1a1a8c"/><rect x="407.98" y="415.8" width="2.0" height="17.2" fill="#1a1a8c"/><rect x="411.31" y="416.5" width="2.0" height="16.5" fill="#1a1a8c"/><rect x="414.65" y="417.1" width="2.0" height="15.9" fill="#1a1a8c"/><rect x="417.98" y="417.8" width="2.0" height="15.2" fill="#1a1a8c"/><rect x="421.31" y="418.3" width="2.0" height="14.7" fill="#1a1a8c"/><rect x="424.64" y="418.8" width="2.0" height="14.2" fill="#1a1a8c"/><rect x="427.98" y="419.2" width="2.0" height="13.8" fill="#1a1a8c"/><rect x="431.31" y="419.6" width="2.0" height="13.4" fill="#1a1a8c"/><rect x="434.64" y="420.8" width="2.0" height="12.2" fill="#1a1a8c"/><rect x="437.98" y="424.8" width="2.0" height="8.2" fill="#1a1a8c"/><rect x="441.31" y="426.7" width="2.0" height="6.3" fill="#1a1a8c"/><rect x="444.64" y="427.7" width="2.0" height="5.3" fill="#1a1a8c"/><rect x="447.98" y="428.7" width="2.0" height="4.3" fill="#1a1a8c"/><rect x="451.31" y="429.2" width="2.0" height="3.8" fill="#1a1a8c"/><rect x="454.64" y="429.6" width="2.0" height="3.4" fill="#1a1a8c"/><rect x="457.98" y="429.9" width="2.0" height="3.1" fill="#1a1a8c"/><rect x="461.31" y="430.2" width="2.0" height="2.8" fill="#1a1a8c"/><rect x="464.64" y="430.6" width="2.0" height="2.4" fill="#1a1a8c"/><rect x="467.97" y="430.9" width="2.0" height="2.1" fill="#1a1a8c"/><rect x="471.31" y="431.2" width="2.0" height="1.8" fill="#1a1a8c"/><rect x="474.64" y="431.6" width="2.0" height="1.4" fill="#1a1a8c"/><rect x="477.97" y="431.9" width="2.0" height="1.1" fill="#1a1a8c"/><rect x="342.32" y="337.6" width="1.8" height="95.4" fill="#7a1414"/><rect x="345.65" y="330.5" width="1.8" height="102.5" fill="#7a1414"/><rect x="348.99" y="325.2" width="1.8" height="107.8" fill="#7a1414"/><rect x="352.32" y="322.4" width="1.8" height="110.6" fill="#7a1414"/><rect x="355.65" y="329.1" width="1.8" height="103.9" fill="#7a1414"/><rect x="358.99" y="334.6" width="1.8" height="98.4" fill="#7a1414"/><rect x="362.32" y="339.9" width="1.8" height="93.1" fill="#7a1414"/><rect x="365.65" y="345.3" width="1.8" height="87.7" fill="#7a1414"/><rect x="368.98" y="351.2" width="1.8" height="81.8" fill="#7a1414"/><rect x="372.32" y="357.4" width="1.8" height="75.6" fill="#7a1414"/><rect x="375.65" y="364.1" width="1.8" height="68.9" fill="#7a1414"/><rect x="378.98" y="368.4" width="1.8" height="64.6" fill="#7a1414"/><rect x="382.32" y="372.4" width="1.8" height="60.6" fill="#7a1414"/><rect x="385.65" y="378.6" width="1.8" height="54.4" fill="#7a1414"/><rect x="388.98" y="384.8" width="1.8" height="48.2" fill="#7a1414"/><rect x="392.31" y="388.2" width="1.8" height="44.8" fill="#7a1414"/><rect x="395.65" y="391.5" width="1.8" height="41.5" fill="#7a1414"/><rect x="398.98" y="394.2" width="1.8" height="38.8" fill="#7a1414"/><rect x="402.31" y="396.7" width="1.8" height="36.3" fill="#7a1414"/><rect x="405.65" y="398.9" width="1.8" height="34.1" fill="#7a1414"/><rect x="408.98" y="400.8" width="1.8" height="32.2" fill="#7a1414"/><rect x="412.31" y="402.2" width="1.8" height="30.8" fill="#7a1414"/><rect x="415.65" y="402.6" width="1.8" height="30.4" fill="#7a1414"/><rect x="418.98" y="403.0" width="1.8" height="30.0" fill="#7a1414"/><rect x="422.31" y="403.6" width="1.8" height="29.4" fill="#7a1414"/><rect x="425.64" y="404.3" width="1.8" height="28.7" fill="#7a1414"/><rect x="428.98" y="405.0" width="1.8" height="28.0" fill="#7a1414"/><rect x="432.31" y="408.7" width="1.8" height="24.3" fill="#7a1414"/><rect x="435.64" y="417.4" width="1.8" height="15.6" fill="#7a1414"/><rect x="439.1" y="414" width="1.8" height="19" fill="#7a1414"/><rect x="444.1" y="417" width="1.8" height="16" fill="#7a1414"/><rect x="451.1" y="420" width="1.8" height="13" fill="#7a1414"/><rect x="457.1" y="418" width="1.8" height="15" fill="#7a1414"/><rect x="467.1" y="420" width="1.8" height="13" fill="#7a1414"/><rect x="476.1" y="420" width="1.8" height="13" fill="#7a1414"/><rect x="480.1" y="420" width="1.8" height="13" fill="#7a1414"/><rect x="489.1" y="423" width="1.8" height="10" fill="#7a1414"/><rect x="499.1" y="428" width="1.8" height="5" fill="#7a1414"/><rect x="509.1" y="426" width="1.8" height="7" fill="#7a1414"/><polygon points="298,433 298.0,432.0 299.0,425.0 302.0,400.0 305.0,385.0 308.0,360.0 311.0,340.0 314.0,330.0 316.0,329.0 318.0,333.0 320.0,345.0 323.0,365.0 326.0,380.0 330.0,395.0 335.0,400.0 340.0,410.0 345.0,415.0 352.0,422.0 362.0,428.0 364.0,432.0 364,433" fill="#5a54b8"/><rect x="297.49" y="428.6" width="2.0" height="4.4" fill="url(#wg)"/><rect x="300.82" y="401.5" width="2.0" height="31.5" fill="url(#wg)"/><rect x="304.16" y="383.7" width="2.0" height="49.3" fill="url(#wg)"/><rect x="307.49" y="356.7" width="2.0" height="76.3" fill="url(#wg)"/><rect x="310.82" y="337.3" width="2.0" height="95.7" fill="url(#wg)"/><rect x="314.16" y="329.4" width="2.0" height="103.6" fill="url(#wg)"/><rect x="317.49" y="335.9" width="2.0" height="97.1" fill="url(#wg)"/><rect x="320.82" y="357.1" width="2.0" height="75.9" fill="url(#wg)"/><rect x="324.15" y="375.8" width="2.0" height="57.2" fill="url(#wg)"/><rect x="327.49" y="389.3" width="2.0" height="43.7" fill="url(#wg)"/><rect x="330.82" y="396.8" width="2.0" height="36.2" fill="url(#wg)"/><rect x="334.15" y="400.3" width="2.0" height="32.7" fill="url(#wg)"/><rect x="337.49" y="407.0" width="2.0" height="26.0" fill="url(#wg)"/><rect x="340.82" y="411.8" width="2.0" height="21.2" fill="url(#wg)"/><rect x="344.15" y="415.2" width="2.0" height="17.8" fill="url(#wg)"/><rect x="347.49" y="418.5" width="2.0" height="14.5" fill="url(#wg)"/><rect x="350.82" y="421.8" width="2.0" height="11.2" fill="url(#wg)"/><rect x="354.15" y="423.9" width="2.0" height="9.1" fill="url(#wg)"/><rect x="357.49" y="425.9" width="2.0" height="7.1" fill="url(#wg)"/><rect x="360.82" y="427.9" width="2.0" height="5.1" fill="url(#wg)"/><line x1="213.2" y1="319.5" x2="213.2" y2="433" stroke="#c4cc7c" stroke-width="1.6" stroke-dasharray="3,1.8"/><line x1="286.4" y1="319.5" x2="286.4" y2="433" stroke="#c4cc7c" stroke-width="1.6" stroke-dasharray="3,1.8"/><line x1="608.8" y1="319.5" x2="608.8" y2="433" stroke="#d0b040" stroke-width="1.5" stroke-dasharray="2.5,1.5"/><clipPath id="hc"><rect x="207" y="319.5" width="401" height="113.5"/></clipPath><polyline clip-path="url(#hc)" points="213,432.00 216,427.49 219,423.41 222,419.70 225,416.29 228,413.14 231,410.21 234,407.47 237,404.90 240,402.47 243,400.18 246,398.01 249,395.95 252,393.98 255,392.10 258,390.31 261,388.58 264,386.93 267,385.34 270,383.80 273,382.32 276,380.89 279,379.51 282,378.17 285,376.88 288,375.62 291,374.40 294,373.21 297,372.06 300,370.94 303,369.84 306,368.78 309,367.74 312,366.73 315,365.74 318,364.77 321,363.83 324,362.90 327,362.00 330,361.11 333,360.25 336,359.40 339,358.56 342,357.75 345,356.95 348,356.16 351,355.39 354,354.63 357,353.89 360,353.16 363,352.44 366,351.74 369,351.04 372,350.36 375,349.69 378,349.03 381,348.38 384,347.74 387,347.10 390,346.48 393,345.87 396,345.27 399,344.67 402,344.08 405,343.50 408,342.93 411,342.37 414,341.81 417,341.27 420,340.72 423,340.19 426,339.66 429,339.14 432,338.63 435,338.12 438,337.62 441,337.12 444,336.63 447,336.14 450,335.66 453,335.19 456,334.72 459,334.26 462,333.80 465,333.35 468,332.90 471,332.45 474,332.01 477,331.58 480,331.15 483,330.72 486,330.30 489,329.89 492,329.47 495,329.06 498,328.66 501,328.26 504,327.86 507,327.47 510,327.08 513,326.69 516,326.31 519,325.93 522,325.55 525,325.18 528,324.81 531,324.44 534,324.08 537,323.72 540,323.36 543,323.01 546,322.66 549,322.31 552,321.97 555,321.62 558,321.29 561,320.95 564,320.61 567,320.28 570,319.95 573,319.63 576,319.30 579,318.98 582,318.66 585,318.35 588,318.03 591,317.72 594,317.41 597,317.11 600,316.80 603,316.50 606,316.20" fill="none" stroke="#a0a450" stroke-width="1.3"/><rect x="484.2" y="322.7" width="7.5" height="7.5" fill="#8a8a8a"/><rect x="578.3" y="320.4" width="14.3" height="13.4" fill="#5e5e5e"/><rect x="594.3" y="320.4" width="13.4" height="13.4" fill="#5e5e5e"/><path d="M582 327l3.5-3.5l3.5 3.5l-3.5 3.5z" fill="none" stroke="#2a2a2a" stroke-width="1.2"/><circle cx="601" cy="327" r="3.6" fill="none" stroke="#2a2a2a" stroke-width="1.2"/></svg>
<div class="a" style="left:653px;top:42px;width:2.5px;height:394px;background:#777"></div>
<div class="a" style="left:608px;top:306px;width:45px;height:130px;background:#f4f4f4"></div>
<div class="a" style="left:607.7px;top:319.5px;width:2px;height:102px;background:repeating-linear-gradient(#e0a020 0 2px,#000 2px 3.5px)"></div>
<div class="a" style="left:609.7px;top:319.5px;width:10.2px;height:100.5px;background:#e01414"></div>
<div class="a" style="left:612.8px;top:322px;width:3px;height:96px;background:#f4d4d4"></div>
<div class="a" style="left:619.9px;top:319.5px;width:10.1px;height:100.5px;background:#128a18"></div>
<div class="a" style="left:623.6px;top:322px;width:3px;height:96px;background:#c8f0c8"></div>
<div class="a" style="left:630px;top:319.5px;width:9.8px;height:100.5px;background:#1212d8"></div>
<div class="a" style="left:633.7px;top:322px;width:3.3px;height:96px;background:#d8d8f8"></div>
<div class="a" style="left:639.8px;top:319.5px;width:11.5px;height:100.5px;background:linear-gradient(#707070,#8a8a8a)"></div>
<div class="a" style="left:639.8px;top:319.5px;width:3px;height:100.5px;background:linear-gradient(#902020,#a05050)"></div>
<div class="a" style="left:648px;top:319.5px;width:3.3px;height:100.5px;background:linear-gradient(#1a30b0,#5a6aa8)"></div>
<div class="a" style="left:644.5px;top:322px;width:3.3px;height:96px;background:#e0e8e0"></div>
<div class="a" style="left:608.5px;top:368px;width:32px;height:4.5px;background:#f4f4f4"></div>
<div class="a" style="left:641.4px;top:384px;width:10.7px;height:4.5px;background:#f4f4f4"></div>
<div class="a" style="left:609.3px;top:421.5px;width:43px;height:11.6px;background:#e4e4e4"></div>
<div class="a" style="left:621.8px;top:421.5px;width:0.8px;height:11.6px;background:#c8c8c8"></div>
<div class="a" style="left:640px;top:421.5px;width:0.8px;height:11.6px;background:#c8c8c8"></div>
<svg class="a" style="left:609px;top:421px" width="44" height="12"><path d="M3.3 6.3l3.2-3.2l3.2 3.2l-3.2 3.2z" fill="none" stroke="#888" stroke-width="0.9"/><circle cx="6.5" cy="6.3" r="1" fill="#aaa"/><path d="M18.8 6.3l3.2-3.2l3.2 3.2l-3.2 3.2z" fill="#000"/><circle cx="37" cy="6.3" r="2.9" fill="none" stroke="#777" stroke-width="1"/></svg>
<div class="a" style="left:207px;top:433px;width:401px;height:1px;background:#dcdce4"></div>
<div class="a" style="left:0px;top:436px;width:800px;height:11.5px;background:#f0f0f0"></div>
<div class="a" style="left:1.5px;top:437px;width:251px;height:10px;border:1px solid #c8c8c8;border-right:1px solid #a0a0a0;background:#f4f4f4"></div>
<div class="a" style="left:252.5px;top:437px;width:117.5px;height:10px;border-left:1px solid #a0a0a0;border-top:1px solid #c8c8c8;background:#f4f4f4"></div>
<div class="a" style="left:370px;top:437px;width:115px;height:10px;border-left:1px solid #a0a0a0;border-top:1px solid #c8c8c8"></div>
<div class="a" style="left:0px;top:447.5px;width:800px;height:1.5px;background:#1a1a1a"></div>
<div class="a" style="left:694.6px;top:437.9px;width:9.4px;height:9.4px;background:#12b022"></div>
<div class="a" style="left:752px;top:437px;width:48px;height:10.5px;border-left:1px solid #d8d8d8;background:#f3f3f3"></div>
<div class="a t" id="t0" style="left:14.00px;top:2.84px;font-size:7.6px;line-height:9.12px;color:#f4f8fc;font-weight:normal;transform:scaleX(0.8662);-webkit-text-stroke:0;">SharpCap (v3.2.6473) - SVBONY SV305 - C:¥Users¥kimuo¥Desktop¥SharpCap Captures</div>
<div class="a t" id="t1" style="left:9.00px;top:16.78px;font-size:7.2px;line-height:8.64px;color:#2a2a2a;font-weight:normal;transform:scaleX(0.9143);">File</div>
<div class="a t" id="t2" style="left:30.50px;top:16.78px;font-size:7.2px;line-height:8.64px;color:#2a2a2a;font-weight:normal;transform:scaleX(0.8741);">Cameras</div>
<div class="a t" id="t3" style="left:67.50px;top:16.78px;font-size:7.2px;line-height:8.64px;color:#2a2a2a;font-weight:normal;transform:scaleX(0.9887);">Options</div>
<div class="a t" id="t4" style="left:103.00px;top:16.78px;font-size:7.2px;line-height:8.64px;color:#2a2a2a;font-weight:normal;transform:scaleX(0.9383);">Capture</div>
<div class="a t" id="t5" style="left:138.00px;top:16.78px;font-size:7.2px;line-height:8.64px;color:#2a2a2a;font-weight:normal;transform:scaleX(0.9534);">Tools</div>
<div class="a t" id="t6" style="left:165.00px;top:16.78px;font-size:7.2px;line-height:8.64px;color:#2a2a2a;font-weight:normal;transform:scaleX(0.9832);">Scripting</div>
<div class="a t" id="t7" style="left:204.00px;top:16.78px;font-size:7.2px;line-height:8.64px;color:#2a2a2a;font-weight:normal;transform:scaleX(1.0137);">Help</div>
<div class="a t" id="t8" style="left:12.50px;top:30.98px;font-size:7.2px;line-height:8.64px;color:#9c9c9c;font-weight:normal;transform:scaleX(0.9181);">Start Capture</div>
<div class="a t" id="t9" style="left:67.50px;top:30.98px;font-size:7.2px;line-height:8.64px;color:#9c9c9c;font-weight:normal;transform:scaleX(0.9684);">Quick Capture</div>
<div class="a t" id="t10" style="left:135.30px;top:30.98px;font-size:7.2px;line-height:8.64px;color:#9c9c9c;font-weight:normal;transform:scaleX(0.9254);">Stop Capture</div>
<div class="a t" id="t11" style="left:190.00px;top:30.98px;font-size:7.2px;line-height:8.64px;color:#9c9c9c;font-weight:normal;transform:scaleX(0.8828);">Pause</div>
<div class="a t" id="t12" style="left:224.50px;top:30.98px;font-size:7.2px;line-height:8.64px;color:#9c9c9c;font-weight:normal;transform:scaleX(0.9218);">Snapshot</div>
<div class="a t" id="t13" style="left:269.10px;top:31.28px;font-size:7.2px;line-height:8.64px;color:#2a2a2a;font-weight:normal;transform:scaleX(0.8953);">Live Stack</div>
<div class="a t" id="t14" style="left:305.00px;top:31.28px;font-size:7.2px;line-height:8.64px;color:#2a2a2a;font-weight:normal;transform:scaleX(0.9415);">Target Name :</div>
<div class="a t" id="t15" style="left:423.00px;top:31.28px;font-size:7.2px;line-height:8.64px;color:#444;font-weight:normal;transform:scaleX(0.9100);">FX :</div>
<div class="a t" id="t16" style="left:439.50px;top:31.28px;font-size:7.2px;line-height:8.64px;color:#2a2a2a;font-weight:normal;transform:scaleX(0.9600);">None</div>
<div class="a t" id="t17" style="left:544.40px;top:31.28px;font-size:7.2px;line-height:8.64px;color:#444;font-weight:normal;transform:scaleX(0.9207);">Zoom :</div>
<div class="a t" id="t18" style="left:569.00px;top:31.28px;font-size:7.2px;line-height:8.64px;color:#2a2a2a;font-weight:normal;transform:scaleX(1.0813);">Auto</div>
<div class="a t" id="t19" style="left:659.00px;top:43.68px;font-size:8.2px;line-height:9.84px;color:#2c3646;font-weight:normal;transform:scaleX(0.8393);-webkit-text-stroke:0.3px #2c3646;">Camera Control Panel</div>
<div class="a t" id="t20" style="left:658.40px;top:61.28px;font-size:6.2px;line-height:7.44px;color:#262626;font-weight:normal;transform:scaleX(0.9329);">Gain</div>
<div class="a t" id="t21" style="left:769.70px;top:60.28px;font-size:7.2px;line-height:8.64px;color:#2a2a2a;font-weight:normal;transform:scaleX(0.9286);">30.0</div>
<div class="a t" id="t22" style="left:658.40px;top:78.68px;font-size:6.2px;line-height:7.44px;color:#262626;font-weight:normal;transform:scaleX(0.9883);">Frame Rate Limit</div>
<div class="a t" id="t23" style="left:711.00px;top:79.32px;font-size:6.8px;line-height:8.16px;color:#333;font-weight:normal;transform:scaleX(0.7466);">Maximum</div>
<div class="a t" id="t24" style="left:658.40px;top:97.08px;font-size:6.2px;line-height:7.44px;color:#262626;font-weight:normal;transform:scaleX(0.9585);">USB Speed</div>
<div class="a t" id="t25" style="left:769.70px;top:96.28px;font-size:7.2px;line-height:8.64px;color:#2a2a2a;font-weight:normal;transform:scaleX(0.8000);">1</div>
<div class="a t" id="t26" style="left:658.40px;top:115.78px;font-size:6.2px;line-height:7.44px;color:#262626;font-weight:normal;transform:scaleX(1.0077);">Black Level</div>
<div class="a t" id="t27" style="left:769.70px;top:115.28px;font-size:7.2px;line-height:8.64px;color:#2a2a2a;font-weight:normal;transform:scaleX(0.9417);">100</div>
<div class="a t" id="t28" style="left:672.50px;top:134.94px;font-size:7.4px;line-height:8.88px;color:#1a1a1a;font-weight:bold;transform:scaleX(0.8551);">Image Controls</div>
<div class="a t" id="t29" style="left:658.40px;top:150.08px;font-size:6.2px;line-height:7.44px;color:#262626;font-weight:normal;transform:scaleX(0.8037);">Contrast</div>
<div class="a t" id="t30" style="left:769.70px;top:149.78px;font-size:7.2px;line-height:8.64px;color:#2a2a2a;font-weight:normal;transform:scaleX(0.8750);">50</div>
<div class="a t" id="t31" style="left:658.40px;top:169.08px;font-size:6.2px;line-height:7.44px;color:#262626;font-weight:normal;transform:scaleX(0.8948);">Gamma</div>
<div class="a t" id="t32" style="left:769.70px;top:168.78px;font-size:7.2px;line-height:8.64px;color:#2a2a2a;font-weight:normal;transform:scaleX(0.8714);">1.00</div>
<div class="a t" id="t33" style="left:658.40px;top:187.98px;font-size:6.2px;line-height:7.44px;color:#262626;font-weight:normal;transform:scaleX(0.9639);">Saturation</div>
<div class="a t" id="t34" style="left:769.70px;top:187.78px;font-size:7.2px;line-height:8.64px;color:#2a2a2a;font-weight:normal;transform:scaleX(0.9583);">150</div>
<div class="a t" id="t35" style="left:658.40px;top:206.38px;font-size:6.2px;line-height:7.44px;color:#262626;font-weight:normal;transform:scaleX(0.9529);">Sharpness</div>
<div class="a t" id="t36" style="left:769.70px;top:206.28px;font-size:7.2px;line-height:8.64px;color:#2a2a2a;font-weight:normal;transform:scaleX(0.8750);">0</div>
<div class="a t" id="t37" style="left:658.40px;top:225.58px;font-size:6.2px;line-height:7.44px;color:#262626;font-weight:normal;transform:scaleX(0.9946);">White Bal (R)</div>
<div class="a t" id="t38" style="left:769.70px;top:225.28px;font-size:7.2px;line-height:8.64px;color:#2a2a2a;font-weight:normal;transform:scaleX(0.9583);">175</div>
<div class="a t" id="t39" style="left:658.40px;top:243.38px;font-size:6.2px;line-height:7.44px;color:#262626;font-weight:normal;transform:scaleX(0.9854);">White Bal (G)</div>
<div class="a t" id="t40" style="left:769.70px;top:243.28px;font-size:7.2px;line-height:8.64px;color:#2a2a2a;font-weight:normal;transform:scaleX(0.9417);">100</div>
<div class="a t" id="t41" style="left:658.40px;top:262.08px;font-size:6.2px;line-height:7.44px;color:#262626;font-weight:normal;transform:scaleX(1.0040);">White Bal (B)</div>
<div class="a t" id="t42" style="left:769.70px;top:261.78px;font-size:7.2px;line-height:8.64px;color:#2a2a2a;font-weight:normal;transform:scaleX(0.9583);">155</div>
<div class="a t" id="t43" style="left:658.40px;top:282.08px;font-size:6.2px;line-height:7.44px;color:#262626;font-weight:normal;transform:scaleX(0.9679);">Auto White Balance</div>
<div class="a t" id="t44" style="left:747.00px;top:282.44px;font-size:7.6px;line-height:9.12px;color:#222;font-weight:normal;transform:scaleX(1.0896);">Adjust</div>
<div class="a t" id="t45" style="left:658.40px;top:296.68px;font-size:6.2px;line-height:7.44px;color:#262626;font-weight:normal;transform:scaleX(0.9580);">Timestamp</div>
<div class="a t" id="t46" style="left:658.40px;top:303.68px;font-size:6.2px;line-height:7.44px;color:#262626;font-weight:normal;transform:scaleX(0.9340);">Frames</div>
<div class="a t" id="t47" style="left:710.40px;top:301.02px;font-size:6.8px;line-height:8.16px;color:#333;font-weight:normal;transform:scaleX(0.8489);">Off</div>
<div class="a t" id="t48" style="left:672.50px;top:318.81px;font-size:7.4px;line-height:8.88px;color:#1a1a1a;font-weight:bold;transform:scaleX(0.8333);">Preprocessing</div>
<div class="a t" id="t49" style="left:658.40px;top:333.88px;font-size:6.2px;line-height:7.44px;color:#262626;font-weight:normal;transform:scaleX(0.9940);">Subtract Dark</div>
<div class="a t" id="t50" style="left:708.00px;top:334.44px;font-size:6.6px;line-height:7.92px;color:#222;font-weight:normal;transform:scaleX(0.9096);">Browse...</div>
<div class="a t" id="t51" style="left:739.70px;top:334.44px;font-size:6.6px;line-height:7.92px;color:#3a4a2a;font-weight:normal;transform:scaleX(0.7802);">None</div>
<div class="a t" id="t52" style="left:658.40px;top:351.08px;font-size:6.2px;line-height:7.44px;color:#262626;font-weight:normal;transform:scaleX(0.9885);">Apply Flat</div>
<div class="a t" id="t53" style="left:708.00px;top:351.64px;font-size:6.6px;line-height:7.92px;color:#222;font-weight:normal;transform:scaleX(0.9096);">Browse...</div>
<div class="a t" id="t54" style="left:739.70px;top:351.64px;font-size:6.6px;line-height:7.92px;color:#3a4a2a;font-weight:normal;transform:scaleX(0.7802);">None</div>
<div class="a t" id="t55" style="left:658.40px;top:365.68px;font-size:6.2px;line-height:7.44px;color:#262626;font-weight:normal;transform:scaleX(0.9067);">Banding</div>
<div class="a t" id="t56" style="left:658.40px;top:372.68px;font-size:6.2px;line-height:7.44px;color:#262626;font-weight:normal;transform:scaleX(0.9272);">Suppression</div>
<div class="a t" id="t57" style="left:769.70px;top:369.28px;font-size:7.2px;line-height:8.64px;color:#2a2a2a;font-weight:normal;transform:scaleX(0.8750);">0</div>
<div class="a t" id="t58" style="left:658.40px;top:384.48px;font-size:6.2px;line-height:7.44px;color:#262626;font-weight:normal;transform:scaleX(0.9067);">Banding</div>
<div class="a t" id="t59" style="left:658.40px;top:390.88px;font-size:6.2px;line-height:7.44px;color:#262626;font-weight:normal;transform:scaleX(0.9558);">Threshold</div>
<div class="a t" id="t60" style="left:769.70px;top:388.48px;font-size:7.2px;line-height:8.64px;color:#a8a8a8;font-weight:normal;transform:scaleX(0.8929);">35.0</div>
<div class="a t" id="t61" style="left:672.50px;top:406.91px;font-size:7.4px;line-height:8.88px;color:#5a1020;font-weight:bold;transform:scaleX(0.8623);">Display Histogram Stretch</div>
<div class="a t" id="t62" style="left:672.50px;top:422.71px;font-size:7.4px;line-height:8.88px;color:#1a1a1a;font-weight:bold;transform:scaleX(0.8659);">Scope Controls</div>
<div class="a t" id="t63" style="left:3.50px;top:298.04px;font-size:7.6px;line-height:9.12px;color:#1d3560;font-weight:normal;transform:scaleX(0.8631);">Live Stack</div>
<div class="a t" id="t64" style="left:5.00px;top:307.68px;font-size:7.2px;line-height:8.64px;color:#333;font-weight:normal;transform:scaleX(0.9009);">Overview</div>
<div class="a t" id="t65" style="left:5.00px;top:315.78px;font-size:7.2px;line-height:8.64px;color:#333;font-weight:normal;transform:scaleX(0.8982);">Frames Stacked</div>
<div class="a t" id="t66" style="left:57.00px;top:315.78px;font-size:7.2px;line-height:8.64px;color:#333;font-weight:normal;">1</div>
<div class="a t" id="t67" style="left:5.00px;top:324.28px;font-size:7.2px;line-height:8.64px;color:#333;font-weight:normal;transform:scaleX(0.8870);">Frames Ignored</div>
<div class="a t" id="t68" style="left:57.00px;top:324.28px;font-size:7.2px;line-height:8.64px;color:#333;font-weight:normal;">2</div>
<div class="a t" id="t69" style="left:5.00px;top:333.88px;font-size:7.2px;line-height:8.64px;color:#333;font-weight:normal;transform:scaleX(0.8679);">Total Exposure:</div>
<div class="a t" id="t70" style="left:57.00px;top:333.88px;font-size:7.2px;line-height:8.64px;color:#4f6e40;font-weight:normal;transform:scaleX(0.8058);">15.00s</div>
<div class="a t" id="t71" style="left:5.60px;top:346.38px;font-size:7.2px;line-height:8.64px;color:#333;font-weight:normal;transform:scaleX(0.9076);">Actions</div>
<div class="a t" id="t72" style="left:17.50px;top:358.54px;font-size:7.6px;line-height:9.12px;color:#222;font-weight:normal;transform:scaleX(0.8399);">Clear</div>
<div class="a t" id="t73" style="left:56.90px;top:358.54px;font-size:7.6px;line-height:9.12px;color:#222;font-weight:normal;transform:scaleX(0.8664);">Save</div>
<div class="a t" id="t74" style="left:16.90px;top:375.44px;font-size:7.6px;line-height:9.12px;color:#222;font-weight:normal;transform:scaleX(0.8122);">Pause</div>
<div class="a t" id="t75" style="left:5.60px;top:401.88px;font-size:7.2px;line-height:8.64px;color:#333;font-weight:normal;transform:scaleX(0.8805);">Advanced</div>
<div class="a t" id="t76" style="left:17.50px;top:413.78px;font-size:7.2px;line-height:8.64px;color:#333;font-weight:normal;transform:scaleX(0.9106);">Save and Reset every</div>
<div class="a t" id="t77" style="left:94.20px;top:413.28px;font-size:7.2px;line-height:8.64px;color:#888;font-weight:normal;">5</div>
<div class="a t" id="t78" style="left:112.00px;top:413.98px;font-size:7.2px;line-height:8.64px;color:#333;font-weight:normal;transform:scaleX(0.9153);">minutes total exposure</div>
<div class="a t" id="t79" style="left:100.80px;top:306.98px;font-size:7.2px;line-height:8.64px;color:#333;font-weight:normal;transform:scaleX(0.9415);">Controls</div>
<div class="a t" id="t80" style="left:112.80px;top:316.28px;font-size:7.2px;line-height:8.64px;color:#333;font-weight:normal;transform:scaleX(0.8785);">Align Frames</div>
<div class="a t" id="t81" style="left:112.80px;top:327.28px;font-size:7.2px;line-height:8.64px;color:#333;font-weight:normal;transform:scaleX(0.8654);">FWHM Filter</div>
<div class="a t" id="t82" style="left:112.80px;top:337.98px;font-size:7.2px;line-height:8.64px;color:#333;font-weight:normal;transform:scaleX(0.9184);">Brightness Filter</div>
<div class="a t" id="t83" style="left:112.80px;top:350.08px;font-size:7.2px;line-height:8.64px;color:#333;font-weight:normal;transform:scaleX(0.9214);">Auto Save on Clear/Close</div>
<div class="a t" id="t84" style="left:100.80px;top:362.48px;font-size:7.2px;line-height:8.64px;color:#333;font-weight:normal;transform:scaleX(0.8564);">Raw Frames</div>
<div class="a t" id="t85" style="left:143.20px;top:362.28px;font-size:7.2px;line-height:8.64px;color:#3f6a35;font-weight:normal;transform:scaleX(0.9164);">Save except wi</div>
<div class="a t" id="t86" style="left:100.80px;top:375.28px;font-size:7.2px;line-height:8.64px;color:#333;font-weight:normal;transform:scaleX(0.8995);">View</div>
<div class="a t" id="t87" style="left:120.70px;top:375.28px;font-size:7.2px;line-height:8.64px;color:#222;font-weight:normal;transform:scaleX(0.9341);">Stack</div>
<div class="a t" id="t88" style="left:100.80px;top:387.98px;font-size:7.2px;line-height:8.64px;color:#333;font-weight:normal;transform:scaleX(0.9138);">Stacking</div>
<div class="a t" id="t89" style="left:132.30px;top:387.98px;font-size:7.2px;line-height:8.64px;color:#222;font-weight:normal;transform:scaleX(0.9964);">Default</div>
<div class="a t" id="t90" style="left:209.60px;top:309.08px;font-size:7.2px;line-height:8.64px;color:#333;font-weight:normal;transform:scaleX(0.9220);">Status</div>
<div class="a t" id="t91" style="left:236.00px;top:309.08px;font-size:7.2px;line-height:8.64px;color:#222;font-weight:normal;transform:scaleX(0.9217);">Histogram</div>
<div class="a t" id="t92" style="left:272.70px;top:309.08px;font-size:7.2px;line-height:8.64px;color:#7a2a3a;font-weight:normal;transform:scaleX(0.8915);">Alignment</div>
<div class="a t" id="t93" style="left:307.70px;top:309.08px;font-size:7.2px;line-height:8.64px;color:#2f4a3f;font-weight:normal;transform:scaleX(0.9537);">Stacking</div>
<div class="a t" id="t94" style="left:340.20px;top:309.08px;font-size:7.2px;line-height:8.64px;color:#3a3030;font-weight:normal;transform:scaleX(0.8747);">Enhancement</div>
<div class="a t" id="t95" style="left:386.90px;top:309.08px;font-size:7.2px;line-height:8.64px;color:#2a2a2a;font-weight:normal;transform:scaleX(0.8515);">Guiding</div>
<div class="a t" id="t96" style="left:415.80px;top:309.08px;font-size:7.2px;line-height:8.64px;color:#4a5a4a;font-weight:normal;transform:scaleX(0.9000);">Filter (FWHM)</div>
<div class="a t" id="t97" style="left:464.00px;top:309.08px;font-size:7.2px;line-height:8.64px;color:#4a5a4a;font-weight:normal;transform:scaleX(0.9256);">Filter (Brightness)</div>
<div class="a t" id="t98" style="left:523.70px;top:309.08px;font-size:7.2px;line-height:8.64px;color:#2a2a2a;font-weight:normal;transform:scaleX(0.9131);">Drift Graph</div>
<div class="a t" id="t99" style="left:563.20px;top:309.08px;font-size:7.2px;line-height:8.64px;color:#2a2a2a;font-weight:normal;transform:scaleX(0.8167);">Log</div>
<div class="a t" id="t100" style="left:494.90px;top:321.30px;font-size:7.0px;line-height:8.40px;color:#7a7a7a;font-weight:normal;transform:scaleX(0.9463);">Logarithmic Horizontal Axis</div>
<div class="a t" id="t101" style="left:222.66px;top:398.75px;font-size:6.6px;line-height:7.92px;color:#a8a8b8;font-weight:normal;transform-origin:0 0;transform:rotate(90deg) scaleX(0.9634);">Black Level</div>
<div class="a t" id="t102" style="left:296.16px;top:358.00px;font-size:6.6px;line-height:7.92px;color:#c8c8c8;font-weight:normal;transform-origin:0 0;transform:rotate(90deg) scaleX(1.0271);">Mid Level</div>
<div class="a t" id="t103" style="left:607.16px;top:336.40px;font-size:6.6px;line-height:7.92px;color:#e0e0e0;font-weight:normal;transform-origin:0 0;transform:rotate(90deg) scaleX(1.1290);">Level</div>
<div class="a t" id="t104" style="left:3.25px;top:438.78px;font-size:7.2px;line-height:8.64px;color:#333;font-weight:normal;transform:scaleX(0.9283);">Previewing : 11 frames (0 dropped) in 0:02:32, exposure 15.0s , last frame 15.0s</div>
<div class="a t" id="t105" style="left:254.60px;top:438.78px;font-size:7.2px;line-height:8.64px;color:#333;font-weight:normal;transform:scaleX(0.9537);">Memory: 2 of 48 frame buffers in use.</div>
<div class="a t" id="t106" style="left:371.60px;top:438.78px;font-size:7.2px;line-height:8.64px;color:#333;font-weight:normal;transform:scaleX(0.9194);">1 Stacked, 2 Ignored, 15.00s</div>
<div class="a t" id="t107" style="left:672.00px;top:438.78px;font-size:7.2px;line-height:8.64px;color:#444;font-weight:normal;transform:scaleX(0.8609);">Frame:</div>
<div class="a t" id="t108" style="left:755.40px;top:438.78px;font-size:7.2px;line-height:8.64px;color:#333;font-weight:normal;transform:scaleX(0.9293);">00:02/00:13</div>
</body></html>
